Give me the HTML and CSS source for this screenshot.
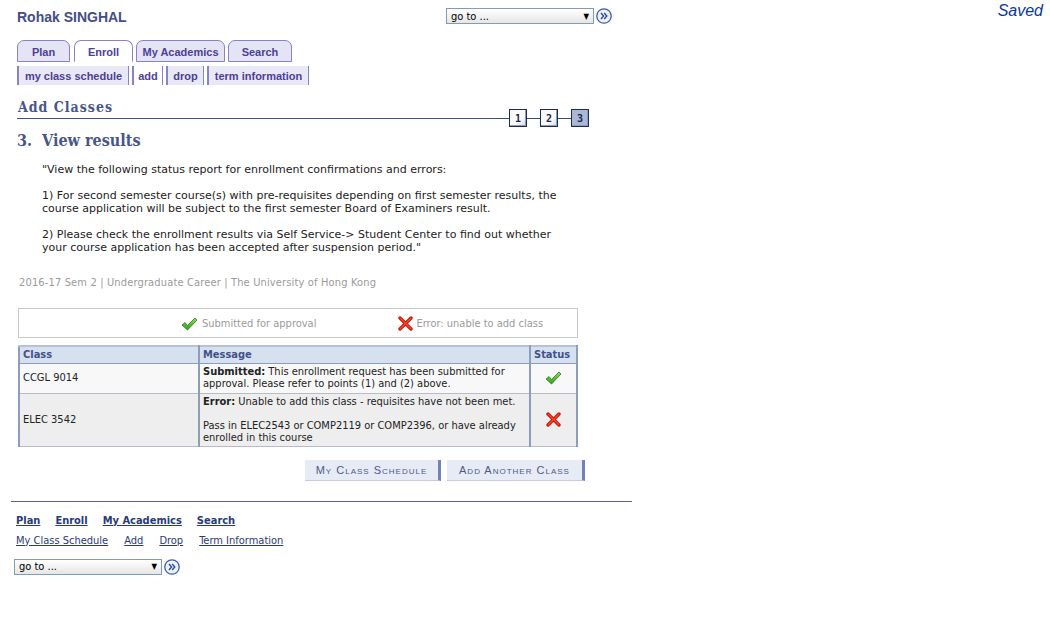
FILE: index.html
```html
<!DOCTYPE html>
<html>
<head>
<meta charset="utf-8">
<title>Add Classes</title>
<link rel="stylesheet" href="styles.css">
</head>
<body>
<div class="topbar">
  <div class="topleft">
    <div class="name">Rohak SINGHAL</div>
    <div class="goto">
      <div class="select"><span>go to ...</span><span class="arrow">▼</span></div>
      <svg class="gobtn" width="16" height="16" viewBox="0 0 16 16"><circle cx="8" cy="8" r="7.2" fill="#eef2fb" stroke="#3b5bb5" stroke-width="1.3"/><path d="M5 5 L7.6 8 L5 11 M8.2 5 L10.8 8 L8.2 11" fill="none" stroke="#2d49a3" stroke-width="1.4"/></svg>
    </div>
  </div>
  <div class="saved">Saved</div>
</div>

<div class="tabs">
  <div class="tab t-plan">Plan</div>
  <div class="tab t-enroll active">Enroll</div>
  <div class="tab t-acad">My Academics</div>
  <div class="tab t-search">Search</div>
</div>
<div class="subtabs">
  <div class="subtab s-sched">my class schedule</div>
  <div class="subtab s-add active">add</div>
  <div class="subtab s-drop">drop</div>
  <div class="subtab s-term">term information</div>
</div>

<div class="main">
  <div class="titlerow">
    <div class="pagetitle">Add Classes</div>
    <div class="steps">
      <div class="stepline short"></div>
      <div class="step"><span>1</span></div>
      <div class="stepline"></div>
      <div class="step"><span>2</span></div>
      <div class="stepline"></div>
      <div class="step current"><span>3</span></div>
    </div>
  </div>
  <div class="subtitle">3.&nbsp; View results</div>

  <div class="intro">
    <p>"View the following status report for enrollment confirmations and errors:</p>
    <p>1) For second semester course(s) with pre-requisites depending on first semester results, the course application will be subject to the first semester Board of Examiners result.</p>
    <p>2) Please check the enrollment results via Self Service-&gt; Student Center to find out whether your course application has been accepted after suspension period."</p>
  </div>

  <div class="career">2016-17 Sem 2 | Undergraduate Career | The University of Hong Kong</div>

  <div class="legend">
    <div class="legend-item l-ok">
      <svg width="17" height="14" viewBox="0 0 17 14"><defs><linearGradient id="g1" x1="0" y1="0" x2="0" y2="1"><stop offset="0" stop-color="#8ee05a"/><stop offset="1" stop-color="#2e9a1c"/></linearGradient></defs><path d="M1 8 L4 5.5 L6.5 8.5 L14 1 L16 3 L6.5 13 Z" fill="url(#g1)" stroke="#2b7d18" stroke-width="0.8" stroke-linejoin="round"/></svg>
      <span>Submitted for approval</span>
    </div>
    <div class="legend-item l-err">
      <svg width="15" height="15" viewBox="0 0 15 15"><path d="M2 2 L13 13 M13 2 L2 13" stroke="#d21a0c" stroke-width="3.4" stroke-linecap="round"/><path d="M2.5 2.3 L12.7 12.5 M12.7 2.3 L2.5 12.5" stroke="#f04a30" stroke-width="1.2" stroke-linecap="round"/></svg>
      <span>Error: unable to add class</span>
    </div>
  </div>

  <table class="results">
    <thead>
      <tr><th class="c-class">Class</th><th class="c-msg">Message</th><th class="c-status">Status</th></tr>
    </thead>
    <tbody>
      <tr class="r1">
        <td class="c-class">CCGL 9014</td>
        <td class="c-msg"><b>Submitted:</b> This enrollment request has been submitted for approval. Please refer to points (1) and (2) above.</td>
        <td class="c-status"><svg width="17" height="14" viewBox="0 0 17 14"><defs><linearGradient id="g2" x1="0" y1="0" x2="0" y2="1"><stop offset="0" stop-color="#8ee05a"/><stop offset="1" stop-color="#2e9a1c"/></linearGradient></defs><path d="M1 8 L4 5.5 L6.5 8.5 L14 1 L16 3 L6.5 13 Z" fill="url(#g2)" stroke="#2b7d18" stroke-width="0.8" stroke-linejoin="round"/></svg></td>
      </tr>
      <tr class="r2">
        <td class="c-class">ELEC 3542</td>
        <td class="c-msg"><b>Error:</b> Unable to add this class - requisites have not been met.<br><br>Pass in ELEC2543 or COMP2119 or COMP2396, or have already enrolled in this course</td>
        <td class="c-status"><svg width="15" height="15" viewBox="0 0 15 15"><path d="M2 2 L13 13 M13 2 L2 13" stroke="#d21a0c" stroke-width="3.4" stroke-linecap="round"/><path d="M2.5 2.3 L12.7 12.5 M12.7 2.3 L2.5 12.5" stroke="#f04a30" stroke-width="1.2" stroke-linecap="round"/></svg></td>
      </tr>
    </tbody>
  </table>

  <div class="buttons">
    <div class="btn b-sched">My Class Schedule</div>
    <div class="btn b-add">Add Another Class</div>
  </div>
</div>

<div class="footer">
  <div class="footrule"></div>
  <div class="flinks main-links">
    <a href="#">Plan</a><a href="#">Enroll</a><a href="#">My Academics</a><a href="#">Search</a>
  </div>
  <div class="flinks sub-links">
    <a href="#">My Class Schedule</a><a href="#">Add</a><a href="#">Drop</a><a href="#">Term Information</a>
  </div>
  <div class="goto foot-goto">
    <div class="select"><span>go to ...</span><span class="arrow">▼</span></div>
    <svg class="gobtn" width="16" height="16" viewBox="0 0 16 16"><circle cx="8" cy="8" r="7.2" fill="#eef2fb" stroke="#3b5bb5" stroke-width="1.3"/><path d="M5 5 L7.6 8 L5 11 M8.2 5 L10.8 8 L8.2 11" fill="none" stroke="#2d49a3" stroke-width="1.4"/></svg>
  </div>
</div>
</body>
</html>
```

FILE: styles.css
```css
* { box-sizing: border-box; }
body {
  margin: 0;
  background: #fff;
  font-family: "DejaVu Sans Condensed", "DejaVu Sans", sans-serif;
  font-stretch: condensed;
  font-size: 11px;
  color: #222;
}

/* top bar */
.topbar {
  display: flex;
  justify-content: space-between;
  align-items: flex-start;
  height: 40px;
}
.topleft {
  width: 612px;
  display: flex;
  justify-content: space-between;
  padding: 7px 0 0 17px;
}
.name {
  font-family: "Liberation Sans", Arial, sans-serif;
  font-weight: bold;
  font-size: 14px;
  color: #434e86;
  padding-top: 2px;
}
.goto {
  display: flex;
  align-items: center;
  gap: 2px;
}
.select {
  width: 148px;
  height: 16px;
  border: 1px solid #7f9db9;
  background: linear-gradient(#ffffff, #e6e6e6);
  display: flex;
  justify-content: space-between;
  align-items: center;
  padding: 0 4px 0 4px;
  font-size: 11px;
  color: #000;
}
.select .arrow { font-size: 8px; }
.saved {
  font-family: "Liberation Sans", Arial, sans-serif;
  font-style: italic;
  font-size: 16px;
  color: #0a36a0;
  padding: 2px 7px 0 0;
}

/* tabs */
.tabs {
  display: flex;
  padding-left: 17px;
  height: 22px;
  gap: 4px;
}
.tab {
  height: 22px;
  border: 1px solid #8783c9;
  border-radius: 7px 7px 0 0;
  background: #e4e4f5;
  font-family: "Liberation Sans", Arial, sans-serif;
  font-weight: bold;
  font-size: 11px;
  color: #4d3f96;
  display: flex;
  align-items: center;
  justify-content: center;
  padding-top: 1px;
}
.tab.active { background: #fff; border-bottom-color: #fff; }
.t-plan { width: 53px; }
.t-enroll { width: 59px; }
.t-acad { width: 89px; margin-left: -1px; }
.t-search { width: 64px; margin-left: -1px; }

.subtabs {
  display: flex;
  padding-left: 17px;
  margin-top: 4px;
  height: 19px;
  gap: 3px;
}
.subtab {
  height: 19px;
  background: #e8e8f6;
  border-left: 2px solid #8783c9;
  border-right: 1px solid #8783c9;
  font-family: "Liberation Sans", Arial, sans-serif;
  font-weight: bold;
  font-size: 11px;
  color: #4d3f96;
  display: flex;
  align-items: center;
  justify-content: center;
}
.subtab.active { background: #fff; }
.s-sched { width: 112px; }
.s-add { width: 31px; }
.s-drop { width: 38px; }
.s-term { width: 102px; }

/* main */
.main { padding-left: 17px; }
.titlerow {
  display: flex;
  align-items: flex-start;
  margin-top: 14px;
  height: 28px;
}
.pagetitle {
  width: 479px;
  height: 20px;
  border-bottom: 1px solid #3f5088;
  font-family: "DejaVu Serif", Georgia, serif;
  font-weight: bold;
  font-size: 14px;
  color: #465689;
  padding-left: 1px;
  letter-spacing: 1px;
}
.steps {
  display: flex;
  align-items: center;
  margin-top: 10px;
}
.stepline { width: 13px; height: 1px; background: #3b4a78; }
.stepline.short { width: 13px; }
.step {
  width: 18px;
  height: 18px;
  border: 1px solid #1f2a55;
  background: linear-gradient(135deg, #f2f5fb, #fff 60%, #cfd7e6);
  display: flex;
  align-items: center;
  justify-content: center;
  box-shadow: inset -1px -1px 0 #8e9cc0;
}
.step span {
  font-family: "DejaVu Sans Mono", monospace;
  font-weight: bold;
  font-size: 10px;
  color: #1c2550;
}
.step.current { background: #a9b9d4; }

.subtitle {
  font-family: "DejaVu Serif", Georgia, serif;
  font-weight: bold;
  font-size: 16px;
  color: #465689;
  margin-top: 4px;
  height: 24px;
}

.intro {
  padding-left: 25px;
  width: 550px;
  line-height: 13px;
  margin-top: 8px;
  font-family: "DejaVu Sans", sans-serif;
  font-stretch: normal;
}
.intro p { margin: 0 0 13px 0; }

.career {
  color: #9a9a9a;
  padding-left: 2px;
  margin-top: 22px;
  letter-spacing: 0.15px;
}

.legend {
  width: 560px;
  height: 30px;
  border: 1px solid #c9c9c9;
  margin-top: 19px;
  margin-left: 1px;
  display: flex;
  align-items: center;
  padding-left: 162px;
  color: #9a9a9a;
}
.legend-item { display: flex; align-items: center; gap: 4px; }
.l-ok svg { margin-top: 2px; }
.l-err { margin-left: 82px; gap: 3px; }

.results {
  margin-top: 7px;
  margin-left: 1px;
  width: 560px;
  border-collapse: collapse;
  font-size: 11px;
  line-height: 12px;
}
.results th {
  background: #d6e1f0;
  color: #435287;
  font-weight: bold;
  text-align: left;
  padding: 1px 3px 1px 3px;
  height: 17px;
  border: 2px solid #8d9dbd;
  border-top-color: #b7c2d8;
  border-bottom-width: 1px;
}
.results td {
  padding: 1px 3px;
  border-left: 2px solid #8d9dbd;
  border-right: 2px solid #8d9dbd;
  border-bottom: 1px solid #b9bcc8;
  vertical-align: middle;
}
.results tr.r1 td { background: #f8f8f8; height: 30px; }
.results tr.r2 td { background: #eeeeee; height: 53px; }
.results td.c-class { width: 180px; }
.results td.c-status { text-align: center; width: 47px; }
.results td.c-status svg { display: inline-block; vertical-align: middle; }
.results b { font-weight: bold; }

.buttons {
  width: 568px;
  display: flex;
  justify-content: flex-end;
  gap: 6px;
  margin-top: 13px;
}
.btn {
  height: 21px;
  background: #e7ebf5;
  border-right: 3px solid #7480b8;
  border-bottom: 1px solid #c5cbe0;
  font-family: "Liberation Sans", Arial, sans-serif;
  font-variant: small-caps;
  font-size: 11px;
  letter-spacing: 1px;
  color: #4b5a8b;
  display: flex;
  align-items: center;
  justify-content: center;
}
.b-sched { width: 136px; }
.b-add { width: 138px; }

/* footer */
.footer { padding-left: 11px; margin-top: 20px; }
.footrule { width: 621px; height: 1px; background: #5a6480; }
.flinks {
  display: flex;
  padding-left: 5px;
  gap: 15px;
}
.flinks a { color: #283a7a; text-decoration: underline; }
.main-links { margin-top: 12px; font-weight: bold; }
.main-links a { font-size: 11px; }
.sub-links { margin-top: 7px; gap: 16px; }
.foot-goto { margin-top: 12px; padding-left: 3px; }
```
